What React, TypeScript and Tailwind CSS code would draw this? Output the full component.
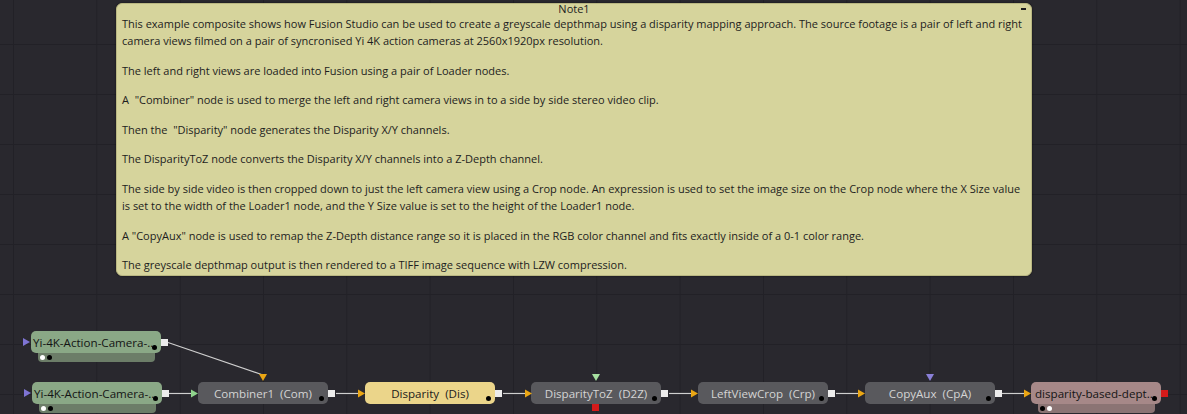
import React from 'react';

type Kind = 'loader' | 'tool' | 'active' | 'saver';

interface GraphNode {
    x: number;
    y: number;
    label: string;
    kind: Kind;
}

const kindClass: Record<Kind, string> = {
    loader: 'bg-[#8aa886] text-[#141414] justify-start pl-[2px]',
    tool: 'bg-[#59595d] text-[#d4d4d4] justify-center',
    active: 'bg-[#ebd58a] text-[#1b1b1b] justify-center',
    saver: 'bg-[#a68888] text-[#141414] justify-start pl-[4px]',
};

const subBarClass: Record<Kind, string> = {
    loader: 'bg-[#6c7d68]',
    tool: '',
    active: '',
    saver: 'bg-[#8b7474]',
};

const nodes: GraphNode[] = [
    { x: 31, y: 331, label: 'Yi-4K-Action-Camera-...', kind: 'loader' },
    { x: 32, y: 382, label: 'Yi-4K-Action-Camera-...', kind: 'loader' },
    { x: 198, y: 382, label: 'Combiner1  (Com)', kind: 'tool' },
    { x: 365, y: 382, label: 'Disparity  (Dis)', kind: 'active' },
    { x: 531, y: 382, label: 'DisparityToZ  (D2Z)', kind: 'tool' },
    { x: 698, y: 382, label: 'LeftViewCrop  (Crp)', kind: 'tool' },
    { x: 865, y: 382, label: 'CopyAux  (CpA)', kind: 'tool' },
    { x: 1031, y: 382, label: 'disparity-based-dept...', kind: 'saver' },
];

const paragraphs = [
    'This example composite shows how Fusion Studio can be used to create a greyscale depthmap using a disparity mapping approach. The source footage is a pair of left and right camera views filmed on a pair of syncronised Yi 4K action cameras at 2560x1920px resolution.',
    'The left and right views are loaded into Fusion using a pair of Loader nodes.',
    'A  "Combiner" node is used to merge the left and right camera views in to a side by side stereo video clip.',
    'Then the  "Disparity" node generates the Disparity X/Y channels.',
    'The DisparityToZ node converts the Disparity X/Y channels into a Z-Depth channel.',
    'The side by side video is then cropped down to just the left camera view using a Crop node. An expression is used to set the image size on the Crop node where the X Size value is set to the width of the Loader1 node, and the Y Size value is set to the height of the Loader1 node.',
    'A "CopyAux" node is used to remap the Z-Depth distance range so it is placed in the RGB color channel and fits exactly inside of a 0-1 color range.',
    'The greyscale depthmap output is then rendered to a TIFF image sequence with LZW compression.',
];

const Node = ({ node }: { node: GraphNode }) => {
    const hasSub = node.kind === 'loader' || node.kind === 'saver';
    return (
        <div className="absolute w-[130px]" style={{ left: node.x, top: node.y }}>
            {hasSub && (
                <div
                    className={`absolute left-[7px] right-[6px] top-[16px] h-[15px] rounded-b-[4px] ${subBarClass[node.kind]}`}
                >
                    <div className="absolute bottom-[2px] left-[2px] flex gap-[2px]">
                        {node.kind === 'loader' ? (
                            <>
                                <span className="w-[5px] h-[5px] rounded-full bg-white" />
                                <span className="w-[5px] h-[5px] rounded-full bg-black" />
                            </>
                        ) : (
                            <>
                                <span className="w-[5px] h-[5px] rounded-full bg-black" />
                                <span className="w-[5px] h-[5px] rounded-full bg-white" />
                            </>
                        )}
                    </div>
                </div>
            )}
            <div
                className={`relative h-[22px] rounded-[5px] flex items-center whitespace-pre text-[11.6px] leading-none pt-[1px] ${kindClass[node.kind]}`}
            >
                {node.label}
                <span className="absolute right-[4px] bottom-[3px] w-[5px] h-[5px] rounded-full bg-black" />
            </div>
        </div>
    );
};

// wires, arrows and ports drawn over the canvas
const Wires = () => {
    const outSquares = [
        [161, 339],
        [162, 390],
        [328, 390],
        [495, 390],
        [661, 390],
        [828, 390],
        [995, 390],
    ];
    const rightArrows = [358, 525, 691, 858, 1024];
    return (
        <svg className="absolute inset-0 pointer-events-none" width="1187" height="414">
            <line x1="168" y1="342.5" x2="263" y2="375" stroke="#cfcfcf" strokeWidth="1.2" />
            <line x1="169" y1="393.5" x2="191" y2="393.5" stroke="#cfcfcf" strokeWidth="1.2" />
            {rightArrows.map((x) => (
                <line key={`l${x}`} x1={x - 22} y1="393.5" x2={x} y2="393.5" stroke="#cfcfcf" strokeWidth="1.2" />
            ))}
            {outSquares.map(([x, y]) => (
                <rect key={`s${x}`} x={x} y={y} width="7" height="7" fill="#ececec" />
            ))}
            {rightArrows.map((x) => (
                <polygon key={`a${x}`} points={`${x},389.5 ${x + 7},393.5 ${x},397.5`} fill="#eaa614" />
            ))}
            {/* loader inputs */}
            <polygon points="23,338 30,342 23,346" fill="#7e74d4" />
            <polygon points="24,389 31,393 24,397" fill="#7e74d4" />
            {/* combiner inputs */}
            <polygon points="191,389.5 198,393.5 191,397.5" fill="#8fd48c" />
            <polygon points="259,374 267,374 263,381" fill="#eaa614" />
            {/* disparity to z */}
            <polygon points="592,374 600,374 596,381" fill="#a6e0a0" />
            <rect x="592" y="404" width="7" height="7" fill="#d41a1a" />
            {/* copyaux */}
            <polygon points="926,374 934,374 930,381" fill="#8a80d8" />
            {/* saver output */}
            <rect x="1161" y="390" width="7" height="7" fill="#d41a1a" />
        </svg>
    );
};

export default function App() {
    return (
        <div
            className="relative w-[1187px] h-[414px] overflow-hidden bg-[#29282e] bg-[linear-gradient(to_right,#222127_1px,transparent_1px),linear-gradient(to_bottom,#222127_1px,transparent_1px)] bg-size-[83.33px_50px] bg-position-[13px_44px] font-['Open_Sans',sans-serif]"
        >
            {/* Note */}
            <div className="ml-[116px] mt-[3px] w-[916px] h-[273px] rounded-[6px] bg-[#d6d49c] border border-[#b9b782] shadow-[0_0_2px_rgba(0,0,0,0.6)] text-[#1d1d1d] text-[11px]">
                <div className="relative h-[10px] flex items-center justify-center leading-[10px]">
                    Note1
                    <span className="absolute right-[5px] top-[4px] w-[5px] h-[1.5px] bg-[#1d1d1d]" />
                </div>
                <div className="px-[5px] pt-[1px] leading-[17px]">
                    {paragraphs.map((p, i) => (
                        <p key={i} className={`whitespace-pre-wrap ${i > 0 ? 'mt-[12.6px]' : ''}`}>
                            {p}
                        </p>
                    ))}
                </div>
            </div>

            {/* Node graph */}
            {nodes.map((n, i) => (
                <Node key={i} node={n} />
            ))}
            <Wires />
        </div>
    );
}
